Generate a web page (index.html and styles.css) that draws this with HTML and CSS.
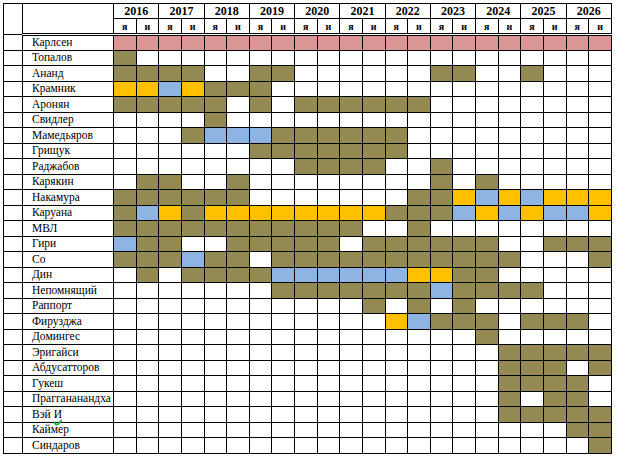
FILE: index.html
```html
<!DOCTYPE html>
<html lang="ru">
<head>
<meta charset="utf-8">
<title>Шахматисты по полугодиям</title>
<link rel="stylesheet" href="styles.css">
</head>
<body>
<div class="sheet">
<table class="grid">
<colgroup>
<col class="col-idx"><col class="col-name">
<col><col><col><col><col><col><col><col><col><col><col>
<col><col><col><col><col><col><col><col><col><col><col>
</colgroup>
<thead>
<tr class="head-years">
<th rowspan="2" class="corner"></th>
<th rowspan="2" class="namehead"></th>
<th colspan="2" class="year">2016</th>
<th colspan="2" class="year">2017</th>
<th colspan="2" class="year">2018</th>
<th colspan="2" class="year">2019</th>
<th colspan="2" class="year">2020</th>
<th colspan="2" class="year">2021</th>
<th colspan="2" class="year">2022</th>
<th colspan="2" class="year">2023</th>
<th colspan="2" class="year">2024</th>
<th colspan="2" class="year">2025</th>
<th colspan="2" class="year">2026</th>
</tr>
<tr class="head-halves">
<th class="half">я</th><th class="half">и</th>
<th class="half">я</th><th class="half">и</th>
<th class="half">я</th><th class="half">и</th>
<th class="half">я</th><th class="half">и</th>
<th class="half">я</th><th class="half">и</th>
<th class="half">я</th><th class="half">и</th>
<th class="half">я</th><th class="half">и</th>
<th class="half">я</th><th class="half">и</th>
<th class="half">я</th><th class="half">и</th>
<th class="half">я</th><th class="half">и</th>
<th class="half">я</th><th class="half">и</th>
</tr>
</thead>
<tbody>
<tr data-cells="p22"><td class="idx"></td><td class="name">Карлсен</td></tr>
<tr data-cells="o1 w21"><td class="idx"></td><td class="name">Топалов</td></tr>
<tr data-cells="o4 w2 o2 w6 o2 w2 o1 w3"><td class="idx"></td><td class="name">Ананд</td></tr>
<tr data-cells="y2 b1 y1 o3 w15"><td class="idx"></td><td class="name">Крамник</td></tr>
<tr data-cells="o5 w1 o1 w1 o6 w8"><td class="idx"></td><td class="name">Аронян</td></tr>
<tr data-cells="w4 o1 w17"><td class="idx"></td><td class="name">Свидлер</td></tr>
<tr data-cells="w3 o1 b3 o6 w9"><td class="idx"></td><td class="name">Мамедьяров</td></tr>
<tr data-cells="w6 o7 w9"><td class="idx"></td><td class="name">Грищук</td></tr>
<tr data-cells="w8 o4 w2 o1 w7"><td class="idx"></td><td class="name">Раджабов</td></tr>
<tr data-cells="w1 o2 w2 o1 w8 o1 w1 o1 w5"><td class="idx"></td><td class="name">Карякин</td></tr>
<tr data-cells="o6 w7 o2 y1 b1 y1 b1 y3"><td class="idx"></td><td class="name">Накамура</td></tr>
<tr data-cells="o1 b1 y1 o1 y8 o3 b1 y1 b1 y1 b2 y1"><td class="idx"></td><td class="name">Каруана</td></tr>
<tr data-cells="o11 w2 o1 w8"><td class="idx"></td><td class="name">МВЛ</td></tr>
<tr data-cells="b1 o2 w2 o5 w1 o6 w2 o3"><td class="idx"></td><td class="name">Гири</td></tr>
<tr data-cells="o3 b1 o2 w1 o11 w3 o1"><td class="idx"></td><td class="name">Со</td></tr>
<tr data-cells="w1 o1 w1 o4 b6 y2 o2 w5"><td class="idx"></td><td class="name">Дин</td></tr>
<tr data-cells="w7 o7 b1 o4 w3"><td class="idx"></td><td class="name">Непомнящий</td></tr>
<tr data-cells="w11 o1 w1 o1 w1 o1 w6"><td class="idx"></td><td class="name">Раппорт</td></tr>
<tr data-cells="w12 y1 b1 o3 w1 o3 w1"><td class="idx"></td><td class="name">Фирузджа</td></tr>
<tr data-cells="w16 o1 w5"><td class="idx"></td><td class="name">Домингес</td></tr>
<tr data-cells="w17 o5"><td class="idx"></td><td class="name">Эригайси</td></tr>
<tr data-cells="w17 o3 w1 o1"><td class="idx"></td><td class="name">Абдусатторов</td></tr>
<tr data-cells="w17 o4 w1"><td class="idx"></td><td class="name">Гукеш</td></tr>
<tr data-cells="w17 o1 w1 o2 w1"><td class="idx"></td><td class="name">Праггананандха</td></tr>
<tr data-cells="w17 o5"><td class="idx"></td><td class="name">Вэй <span class="spell">И</span></td></tr>
<tr data-cells="w20 o2"><td class="idx"></td><td class="name">Каймер</td></tr>
<tr data-cells="w21 o1"><td class="idx"></td><td class="name">Синдаров</td></tr>
</tbody>
</table>
</div>
<script src="script.js"></script>
</body>
</html>
```

FILE: styles.css
```css
body {
  margin: 0;
  background: #fff;
}

.sheet {
  padding: 3px 0 0 3px;
}

.grid {
  border-collapse: collapse;
  table-layout: fixed;
  width: 609px;
  color: #000;
}

.grid th,
.grid td {
  border: 1px solid #000;
  padding: 0;
  font-family: "Liberation Serif", "DejaVu Serif", "Times New Roman", serif;
}

.col-idx {
  width: 19px;
}

.col-name {
  width: 91px;
}

.head-years {
  height: 15px;
}

.head-halves {
  height: 16px;
}

.grid .year {
  font-size: 12px;
  font-weight: bold;
  text-align: center;
  line-height: 13px;
}

.grid .half {
  font-size: 10px;
  font-weight: bold;
  text-align: center;
  line-height: 11px;
  border-bottom: 3px double #000;
}

.grid .namehead {
  border-bottom: 3px double #000;
}

.grid .corner {
  border-bottom: 1px solid #000;
}

.grid tbody tr {
  height: 15.5px;
}

.grid .name {
  font-size: 11.5px;
  line-height: 13px;
  padding-left: 9px;
  white-space: nowrap;
  text-align: left;
}

.spell {
  text-decoration-line: underline;
  text-decoration-style: wavy;
  text-decoration-color: #22b14c;
  text-decoration-thickness: 1.5px;
  text-underline-offset: 1px;
  text-decoration-skip-ink: none;
}

.cell.p {
  background: #da9694;
}

.cell.o {
  background: #948a54;
}

.cell.y {
  background: #ffc000;
}

.cell.b {
  background: #8db4e2;
}
```

FILE: script.js
```js
document.querySelectorAll('tr[data-cells]').forEach(function (row) {
  row.getAttribute('data-cells').split(' ').forEach(function (run) {
    var kind = run.charAt(0);
    var count = parseInt(run.slice(1), 10);
    for (var i = 0; i < count; i++) {
      var td = document.createElement('td');
      td.className = kind === 'w' ? 'cell' : 'cell ' + kind;
      row.appendChild(td);
    }
  });
});
```
